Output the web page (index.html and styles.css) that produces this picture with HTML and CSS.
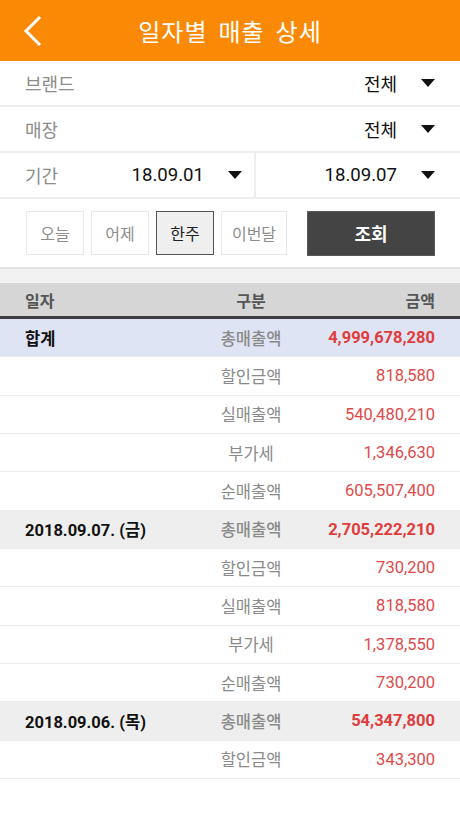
FILE: index.html
```html
<!DOCTYPE html>
<html lang="ko">
<head>
  <meta charset="UTF-8">
  <meta name="viewport" content="width=device-width, initial-scale=1.0">
  <title>일자별 매출 상세</title>
  <link rel="stylesheet" href="styles.css">
</head>
<body>
  <div class="app">
    <div class="topbar">
      <div class="topbar__back">
        <svg width="20" height="32" viewBox="0 0 20 32"><path d="M17 2 L3 16 L17 30" fill="none" stroke="#fff" stroke-width="3"/></svg>
      </div>
      <h1 class="topbar__title">일자별 매출 상세</h1>
    </div>

    <div class="filter">
      <div class="filter__row">
        <span class="filter__label">브랜드</span>
        <div class="select">전체<i class="caret"></i></div>
      </div>
      <div class="filter__row">
        <span class="filter__label">매장</span>
        <div class="select">전체<i class="caret"></i></div>
      </div>
      <div class="filter__row filter__row--period">
        <div class="period">
          <span class="filter__label">기간</span>
          <div class="select select--date">18.09.01<i class="caret"></i></div>
        </div>
        <div class="period period--end">
          <div class="select select--date">18.09.07<i class="caret"></i></div>
        </div>
      </div>
      <div class="quick">
        <div class="quick__btn">오늘</div>
        <div class="quick__btn">어제</div>
        <div class="quick__btn quick__btn--on">한주</div>
        <div class="quick__btn quick__btn--wide">이번달</div>
        <div class="search">조회</div>
      </div>
    </div>

    <div class="spacer"></div>

    <div class="table">
      <div class="table__head">
        <div>일자</div>
        <div class="col-kind">구분</div>
        <div class="col-amt">금액</div>
      </div>
      <div id="rows"></div>
    </div>
  </div>

  <script>
  var groups = [
    { date: '합계', cls: 'row--total', items: [
      ['총매출액', '4,999,678,280'],
      ['할인금액', '818,580'],
      ['실매출액', '540,480,210'],
      ['부가세', '1,346,630'],
      ['순매출액', '605,507,400']
    ]},
    { date: '2018.09.07. (금)', cls: 'row--day', items: [
      ['총매출액', '2,705,222,210'],
      ['할인금액', '730,200'],
      ['실매출액', '818,580'],
      ['부가세', '1,378,550'],
      ['순매출액', '730,200']
    ]},
    { date: '2018.09.06. (목)', cls: 'row--day', items: [
      ['총매출액', '54,347,800'],
      ['할인금액', '343,300']
    ]}
  ];

  var html = '';
  groups.forEach(function (g) {
    g.items.forEach(function (it, i) {
      var first = i === 0;
      html += '<div class="row ' + (first ? g.cls : '') + '">' +
        '<div class="col-date">' + (first ? g.date : '') + '</div>' +
        '<div class="col-kind">' + it[0] + '</div>' +
        '<div class="col-amt">' + it[1] + '</div>' +
        '</div>';
    });
  });
  document.getElementById('rows').innerHTML = html;
  </script>
</body>
</html>
```

FILE: styles.css
```css
body {
  margin: 0;
  font-family: Roboto, "Noto Sans CJK KR", sans-serif;
  background-color: #fff;
}

* {
  margin: 0;
  box-sizing: border-box;
}

.app {
  width: 460px;
  height: 818px;
  overflow: hidden;
}

.topbar {
  display: flex;
  align-items: center;
  justify-content: center;
  position: relative;
  height: 61px;
  background-color: #fa8a05;
}

.topbar__back {
  position: absolute;
  left: 23px;
  top: 15px;
  height: 32px;
}

.topbar__title {
  color: #fff;
  font-size: 24px;
  font-weight: 400;
  letter-spacing: 1px;
  word-spacing: 4px;
}

.filter__row {
  display: flex;
  justify-content: space-between;
  align-items: center;
  height: 46px;
  padding: 0 25px;
  border-bottom: 2px solid #eeeeee;
}

.filter__label {
  font-size: 18px;
  color: #8c8c8c;
}

.select {
  display: flex;
  align-items: center;
  font-size: 18px;
  color: #111;
}

.select--date {
  font-size: 18.6px;
}

.caret {
  width: 0;
  height: 0;
  margin-left: 24px;
  border-left: 7px solid transparent;
  border-right: 7px solid transparent;
  border-top: 8px solid #111;
}

.filter__row--period {
  padding: 0;
}

.period {
  display: flex;
  justify-content: space-between;
  align-items: center;
  width: 256px;
  height: 100%;
  padding: 0 12px 0 25px;
  border-right: 2px solid #eeeeee;
}

.period--end {
  flex: 1;
  justify-content: flex-end;
  padding: 0 25px;
  border-right: none;
}

.quick {
  display: flex;
  align-items: center;
  height: 70px;
  padding: 0 25px 0 26px;
  border-bottom: 2px solid #e2e2e2;
}

.quick__btn {
  display: flex;
  justify-content: center;
  align-items: center;
  width: 58px;
  height: 44px;
  margin-right: 7px;
  border: 1px solid #e8e8e8;
  font-size: 16px;
  color: #8c8c8c;
}

.quick__btn--wide {
  width: 66px;
}

.quick__btn--on {
  background-color: #efefef;
  border-color: #555;
  color: #222;
}

.search {
  display: flex;
  justify-content: center;
  align-items: center;
  margin-left: auto;
  width: 128px;
  height: 45px;
  background-color: #444;
  border: 1px solid #5a5a5a;
  color: #fff;
  font-size: 18px;
  font-weight: 700;
}

.spacer {
  height: 14px;
  background-color: #f2f2f2;
}

.table__head,
.row {
  display: flex;
  align-items: center;
  padding: 0 25px;
}

.table__head {
  height: 36px;
  background-color: #d6d6d6;
  border-bottom: 3px solid #3c3c42;
  font-size: 16px;
  font-weight: 700;
  color: #555;
}

.table__head div:first-child,
.col-date {
  flex: 1;
}

.col-kind {
  width: 120px;
  text-align: center;
}

.col-amt {
  width: 124px;
  text-align: right;
}

.row {
  height: 38.33px;
  border-bottom: 1px solid #ebebeb;
  font-size: 16.5px;
}

.row .col-kind {
  color: #8a8a8a;
}

.row .col-amt {
  color: #e04a4a;
}

.row--total {
  background-color: #dfe4f4;
}

.row--day {
  background-color: #eeeeee;
}

.row--total .col-date,
.row--day .col-date {
  color: #111;
  font-weight: 700;
}

.row--total .col-kind,
.row--day .col-kind {
  font-weight: 500;
}

.row--total .col-amt,
.row--day .col-amt {
  font-weight: 700;
  color: #e03c3c;
}
```
